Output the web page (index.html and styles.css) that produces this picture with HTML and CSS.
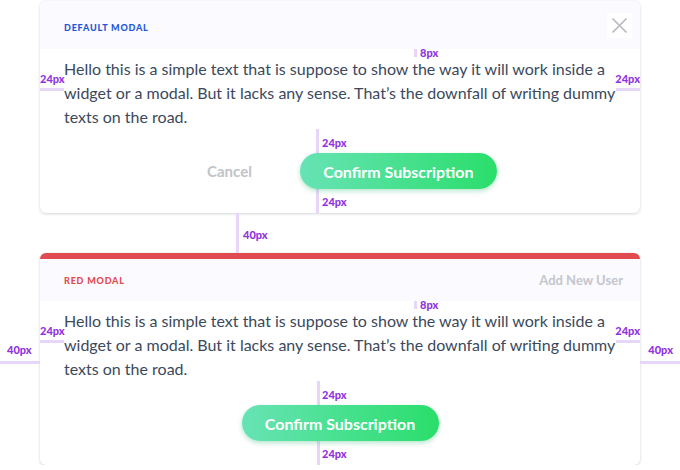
FILE: index.html
```html
<!DOCTYPE html>
<html>
<head>
<meta charset="utf-8">
<link rel="stylesheet" href="styles.css">
</head>
<body>
<div class="page">
  <section class="modal">
    <header class="modal-head">
      <h2 class="modal-title title-blue">Default Modal</h2>
      <button class="close" aria-label="Close">
        <svg width="17" height="17" viewBox="0 0 17 17"><path d="M1.5 1.5 L15.5 15.5 M15.5 1.5 L1.5 15.5" stroke="#b7bac2" stroke-width="1.7" fill="none"/></svg>
      </button>
    </header>
    <p class="modal-body">Hello this is a simple text that is suppose to show the way it will work inside a widget or a modal. But it lacks any sense. That’s the downfall of writing dummy texts on the road.</p>
    <footer class="modal-foot">
      <button class="btn-cancel">Cancel</button>
      <button class="btn-confirm">Confirm Subscription</button>
    </footer>

    <span class="bar bar-v bar-8"></span><span class="lbl lbl-8">8px</span>
    <span class="bar bar-h bar-l24"></span><span class="lbl lbl-l24">24px</span>
    <span class="bar bar-h bar-r24"></span><span class="lbl lbl-r24">24px</span>
    <span class="bar bar-v bar-btn b1"></span>
    <span class="lbl lbl-btn-top b1l">24px</span>
    <span class="lbl lbl-btn-bot b1l">24px</span>
    <span class="bar bar-v bar-gap"></span><span class="lbl lbl-gap">40px</span>
  </section>

  <section class="modal modal-red">
    <header class="modal-head">
      <h2 class="modal-title title-red">Red Modal</h2>
      <button class="head-action">Add New User</button>
    </header>
    <p class="modal-body">Hello this is a simple text that is suppose to show the way it will work inside a widget or a modal. But it lacks any sense. That’s the downfall of writing dummy texts on the road.</p>
    <footer class="modal-foot">
      <button class="btn-confirm">Confirm Subscription</button>
    </footer>

    <span class="bar bar-v bar-8"></span><span class="lbl lbl-8">8px</span>
    <span class="bar bar-h bar-l24"></span><span class="lbl lbl-l24">24px</span>
    <span class="bar bar-h bar-r24"></span><span class="lbl lbl-r24">24px</span>
    <span class="bar bar-h bar-l40"></span><span class="lbl lbl-l40">40px</span>
    <span class="bar bar-h bar-r40"></span><span class="lbl lbl-r40">40px</span>
    <span class="bar bar-v bar-btn b2"></span>
    <span class="lbl lbl-btn-top b2l">24px</span>
    <span class="lbl lbl-btn-bot b2l">24px</span>
  </section>
</div>
</body>
</html>
```

FILE: styles.css
```css
* { box-sizing: border-box; }
html, body { margin: 0; padding: 0; background: #ffffff; }
body { font-family: "Source Sans Pro", Lato, "Liberation Sans", sans-serif; }

.page {
  padding: 1px 40px 0;
  display: flex;
  flex-direction: column;
  gap: 40px;
}

.modal {
  position: relative;
  width: 600px;
  background: #fff;
  border-radius: 6px;
  box-shadow: 0 1px 3px rgba(30, 40, 60, 0.18), 0 0 1px rgba(30, 40, 60, 0.12);
}

.modal-head {
  height: 48px;
  background: #fbfaff;
  border-radius: 6px 6px 0 0;
  display: flex;
  align-items: center;
  justify-content: space-between;
  padding: 4px 8px 0 24px;
}
.modal-red .modal-head {
  border-top: 6px solid #e04b50;
  padding: 0 17px 0 24px;
}

.modal-title {
  margin: 0;
  font-size: 9px;
  font-weight: 900;
  letter-spacing: 0.8px;
  text-transform: uppercase;
}
.title-blue { color: #2356d6; }
.title-red { color: #e04b50; }

.close {
  width: 25px;
  height: 25px;
  margin-top: -4px;
  border: 0;
  background: #fff;
  display: flex;
  align-items: center;
  justify-content: center;
  padding: 0;
}

.head-action {
  border: 0;
  background: none;
  padding: 0;
  font-family: inherit;
  font-size: 13px;
  font-weight: 700;
  color: #c3c6cb;
}

.modal-body {
  margin: 0;
  padding: 8px 24px 0;
  font-size: 16px;
  line-height: 24px;
  color: #3b495c;
}

.modal-foot {
  position: relative;
  z-index: 2;
  padding: 24px 0;
  display: flex;
  justify-content: center;
  gap: 24px;
}

.btn-cancel {
  border: 0;
  background: none;
  padding: 0 24px;
  height: 36px;
  font-family: inherit;
  font-size: 15px;
  font-weight: 700;
  color: #c1c4c8;
}

.btn-confirm {
  border: 0;
  height: 36px;
  width: 197px;
  border-radius: 18px;
  padding: 0;
  font-family: inherit;
  font-size: 16px;
  font-weight: 700;
  color: #fff;
  background: linear-gradient(90deg, #67e3b5 0%, #2ade6b 100%);
  box-shadow: 0 2px 5px rgba(40, 180, 110, 0.35);
}

/* measurement overlays */
.bar { position: absolute; background: #e6d6f8; z-index: 1; }
.bar-v { width: 3px; }
.bar-h { height: 3px; }
.lbl {
  position: absolute;
  z-index: 3;
  font-family: "Source Sans Pro", Lato, "Liberation Sans", sans-serif;
  font-size: 11px;
  font-weight: 900;
  line-height: 12px;
  color: #9233e0;
}

.bar-8 { left: 374px; top: 48px; height: 8px; }
.lbl-8 { left: 380px; top: 46px; }

.bar-l24 { left: 0; top: 87px; width: 24px; }
.lbl-l24 { left: 0; top: 72px; }
.bar-r24 { right: 0; top: 87px; width: 24px; }
.lbl-r24 { right: 0; top: 72px; }

.bar-l40 { left: -40px; top: 108px; width: 40px; }
.lbl-l40 { left: -33px; top: 91px; }
.bar-r40 { right: -40px; top: 108px; width: 40px; }
.lbl-r40 { right: -33px; top: 91px; }

.bar-btn { top: 128px; height: 84px; }
.b1 { left: 276px; }
.b2 { left: 277px; }
.lbl-btn-top { top: 136px; }
.lbl-btn-bot { top: 195px; }
.b1l { left: 282px; }
.b2l { left: 282px; }

.bar-gap { left: 196px; top: 212px; height: 40px; }
.lbl-gap { left: 203px; top: 228px; }
```
